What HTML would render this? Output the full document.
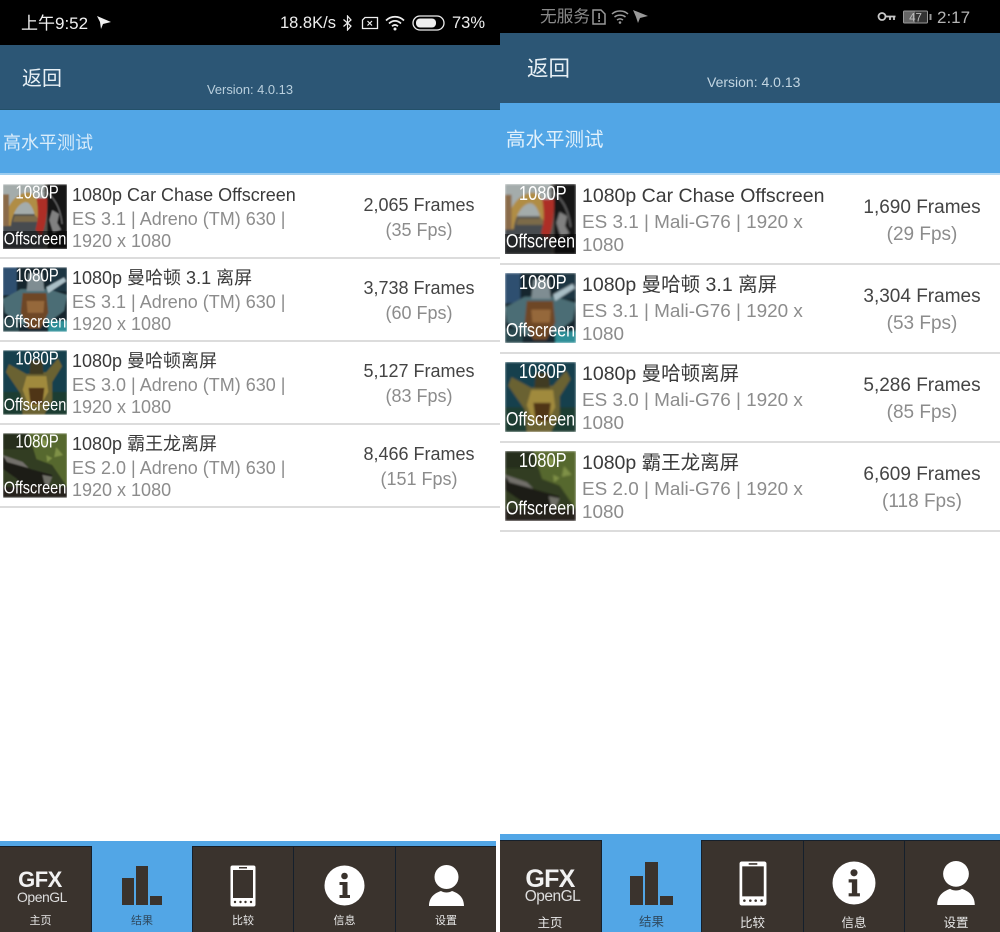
<!DOCTYPE html>
<html><head><meta charset="utf-8">
<style>
html,body{margin:0;padding:0;background:#fff;}
#p{position:relative;width:1000px;height:932px;overflow:hidden;background:#fff;font-family:"Liberation Sans","Noto Sans CJK SC",sans-serif;}
.a{position:absolute;}
.t{position:absolute;white-space:nowrap;line-height:1;}
.th{position:absolute;overflow:hidden;}
.th svg{position:absolute;left:0;top:0;width:100%;height:100%;}
.th .u,.th .d{position:absolute;left:0;width:100%;text-align:center;color:#fff;line-height:1;white-space:nowrap;transform:scaleY(1.22);transform-origin:50% 0;}
.th .bg{position:absolute;left:0;width:100%;background:rgba(0,0,0,.5);}
.lab{position:absolute;color:#e8e8e8;text-align:center;font-size:11px;line-height:1;white-space:nowrap;}
.l1{font-size:18px;color:#3a3a3a}
.l2{font-size:18px;color:#8c8c8c}
.r1{font-size:19.5px;color:#3a3a3a}
.r2{font-size:18.9px;color:#8c8c8c}
.lf{left:339px;width:160px;text-align:center;font-size:18px}
.rf{left:842px;width:160px;text-align:center;font-size:19px}
</style></head><body><div id="p">
<svg width="0" height="0" class="a"><defs>
<filter id="b" x="-10%" y="-10%" width="120%" height="120%"><feGaussianBlur stdDeviation="0.9"/></filter>
<g id="car"><rect width="65" height="65" fill="#55534e"/><rect width="42" height="30" fill="#a4acab"/><rect y="36" width="42" height="29" fill="#474b4f"/><path d="M0 42C3 22 12 9 25 8C33 8 37 18 38 34L33 34C31 24 27 17 22 18C14 20 9 32 8 42Z" fill="#b08d45"/><path d="M0 10H6V42H0Z" fill="#8a6a48"/><path d="M12 32L34 32L36 38L10 38Z" fill="#7b6a4a"/><path d="M34 14L45 14C45 30 43 44 39 52L33 46C36 36 36 26 34 14Z" fill="#ad2f27"/><rect x="45" y="0" width="20" height="65" fill="#141417"/><path d="M36 6C48 6 58 20 60 40" fill="none" stroke="#777" stroke-width="1"/><path d="M50 26l7 4-2 9 4 7-8 3-4-13z" fill="#808080"/></g>
<g id="man31"><rect width="65" height="65" fill="#14262f"/><rect x="0" y="0" width="14" height="28" fill="#2f4f70"/><rect x="48" y="0" width="17" height="24" fill="#1c3442"/><path d="M0 32L18 22L46 22L65 28L62 44L46 56L20 58L2 46Z" fill="#4c6d74"/><path d="M20 26L44 26L46 46L38 62L26 62L18 46Z" fill="#6e4726"/><path d="M24 34L42 34L41 46L25 46Z" fill="#95683a"/><path d="M26 6L40 6L42 24L24 24Z" fill="#7f8d92"/><path d="M44 20L62 10L64 14L46 26Z" fill="#a9bec6"/><rect y="54" x="46" width="19" height="11" fill="#2f8f98"/><rect y="52" x="0" width="16" height="13" fill="#2a4a50"/></g>
<g id="man"><rect width="65" height="65" fill="#17414d"/><rect y="42" width="65" height="23" fill="#1f3d33"/><path d="M6 14L24 24L44 22L56 8L60 16L50 32L50 50L42 65L20 65L18 44L3 22Z" fill="#6a6230"/><path d="M24 26L44 26L46 42L38 56L26 56L20 40Z" fill="#a08a3e"/><path d="M26 38L42 38L40 55L28 55Z" fill="#4f3519"/><path d="M28 10L40 10L41 24L27 24Z" fill="#3f3a20"/></g>
<g id="rex"><rect width="65" height="65" fill="#333c20"/><path d="M26 0L65 0L65 54L50 32L34 26Z" fill="#56682f"/><path d="M38 4l8 5-5 6zM54 14l7 8-9 2zM44 22l6 3-5 4z" fill="#7f9146"/><rect y="0" width="26" height="16" fill="#262f1c"/><path d="M0 24L28 36L50 42L46 56L24 60L14 46L0 36Z" fill="#1e1b19"/><path d="M0 22L20 29L26 35L4 29Z" fill="#72706a"/><path d="M40 42L50 44L46 54L42 50Z" fill="#6e6e66"/><rect y="54" width="65" height="11" fill="#26241b"/></g>
</defs></svg>

<!-- LEFT -->
<div class="a" style="left:0;top:0;width:500px;height:45px;background:#000"></div>
<div class="a" style="left:0;top:45px;width:500px;height:64px;background:#2c5675"></div>
<div class="a" style="left:0;top:109px;width:500px;height:1px;background:#235069"></div>
<div class="a" style="left:0;top:110px;width:500px;height:64px;background:#52a6e6"></div>
<div class="a" style="left:0;top:173px;width:500px;height:2px;background:#9ccdf0"></div>
<div class="t" style="left:21px;top:15px;font-size:17px;color:#f0f0f0">上午9:52</div>
<svg class="a" style="left:96px;top:15px" width="16" height="15" viewBox="0 0 16 15"><path d="M1 1L15 7L7 9L5 14L4 7Z" fill="#f0f0f0"/></svg>
<div class="t" style="left:280px;top:15px;font-size:16.5px;color:#eee">18.8K/s</div>
<svg class="a" style="left:342px;top:15px" width="11" height="16" viewBox="0 0 11 16"><path d="M1.5 4.5L9 11L5.5 15V1L9 5L1.5 11.5" fill="none" stroke="#eee" stroke-width="1.2"/></svg>
<svg class="a" style="left:361px;top:16px" width="18" height="14" viewBox="0 0 18 14"><path d="M4 1.5H16.5V12.5H1.5V4Z" fill="none" stroke="#eee" stroke-width="1.3"/><path d="M6.5 5L11 9.5M11 5L6.5 9.5" stroke="#eee" stroke-width="1.2"/></svg>
<svg class="a" style="left:385px;top:15px" width="21" height="16" viewBox="0 0 21 16"><path d="M1 5.5C6 .5 14 .5 19 5.5M4 8.5C7.5 5 12.5 5 16 8.5M7 11.3C9 9.5 11 9.5 13 11.3" fill="none" stroke="#eee" stroke-width="1.7"/><circle cx="10" cy="14" r="1.5" fill="#eee"/></svg>
<svg class="a" style="left:412px;top:15px" width="33" height="16" viewBox="0 0 33 16"><rect x="1" y="1" width="31" height="14" rx="7" fill="none" stroke="#eee" stroke-width="1.3"/><rect x="4" y="3.5" width="20" height="9" rx="4" fill="#eee"/></svg>
<div class="t" style="left:452px;top:15px;font-size:16.5px;color:#eee">73%</div>
<div class="t" style="left:22px;top:69px;font-size:20px;color:#e8f0f5">返回</div>
<div class="t" style="left:207px;top:84px;font-size:12.9px;color:#b9cfdd">Version: 4.0.13</div>
<div class="t" style="left:3px;top:134px;font-size:18px;color:#d9ecfa">高水平测试</div>

<!-- left rows -->
<div class="a" style="left:0;top:257px;width:500px;height:2px;background:#dcdcdc"></div>
<div class="a" style="left:0;top:340px;width:500px;height:2px;background:#dcdcdc"></div>
<div class="a" style="left:0;top:423px;width:500px;height:2px;background:#dcdcdc"></div>
<div class="a" style="left:0;top:506px;width:500px;height:2px;background:#dcdcdc"></div>

<div class="th" style="left:3px;top:184px;width:64px;height:65px"><svg viewBox="0 0 65 65"><use href="#car" filter="url(#b)"/></svg><div class="bg" style="top:47px;height:18px"></div><div class="u" style="top:0;font-size:15px">&nbsp;1080P</div><div class="d" style="top:47px;font-size:14.5px">Offscreen</div></div>
<div class="th" style="left:3px;top:267px;width:64px;height:65px"><svg viewBox="0 0 65 65"><use href="#man31" filter="url(#b)"/></svg><div class="u" style="top:0;font-size:15px">&nbsp;1080P</div><div class="d" style="top:47px;font-size:14.5px">Offscreen</div></div>
<div class="th" style="left:3px;top:350px;width:64px;height:65px"><svg viewBox="0 0 65 65"><use href="#man" filter="url(#b)"/></svg><div class="u" style="top:0;font-size:15px">&nbsp;1080P</div><div class="d" style="top:47px;font-size:14.5px">Offscreen</div></div>
<div class="th" style="left:3px;top:433px;width:64px;height:65px"><svg viewBox="0 0 65 65"><use href="#rex" filter="url(#b)"/></svg><div class="u" style="top:0;font-size:15px">&nbsp;1080P</div><div class="d" style="top:47px;font-size:14.5px">Offscreen</div></div>

<div class="t l1" style="left:72px;top:186px">1080p Car Chase Offscreen</div>
<div class="t l2" style="left:72px;top:210px">ES 3.1 | Adreno (TM) 630 |</div>
<div class="t l2" style="left:72px;top:232px">1920 x 1080</div>
<div class="t l1" style="left:72px;top:269px">1080p 曼哈顿 3.1 离屏</div>
<div class="t l2" style="left:72px;top:293px">ES 3.1 | Adreno (TM) 630 |</div>
<div class="t l2" style="left:72px;top:315px">1920 x 1080</div>
<div class="t l1" style="left:72px;top:352px">1080p 曼哈顿离屏</div>
<div class="t l2" style="left:72px;top:376px">ES 3.0 | Adreno (TM) 630 |</div>
<div class="t l2" style="left:72px;top:398px">1920 x 1080</div>
<div class="t l1" style="left:72px;top:435px">1080p 霸王龙离屏</div>
<div class="t l2" style="left:72px;top:459px">ES 2.0 | Adreno (TM) 630 |</div>
<div class="t l2" style="left:72px;top:481px">1920 x 1080</div>

<div class="t lf" style="top:196px;color:#444">2,065 Frames</div>
<div class="t lf" style="top:221px;color:#8c8c8c">(35 Fps)</div>
<div class="t lf" style="top:279px;color:#444">3,738 Frames</div>
<div class="t lf" style="top:304px;color:#8c8c8c">(60 Fps)</div>
<div class="t lf" style="top:362px;color:#444">5,127 Frames</div>
<div class="t lf" style="top:387px;color:#8c8c8c">(83 Fps)</div>
<div class="t lf" style="top:445px;color:#444">8,466 Frames</div>
<div class="t lf" style="top:470px;color:#8c8c8c">(151 Fps)</div>

<!-- left tab bar -->
<div class="a" style="left:0;top:841px;width:496px;height:6px;background:#52a6e6"></div>
<div class="a" style="left:0;top:846px;width:496px;height:86px;background:#15202c"></div>
<div class="a" style="left:0;top:847px;width:91px;height:85px;background:#3a332d"></div>
<div class="a" style="left:92px;top:841px;width:100px;height:91px;background:#52a6e6"></div>
<div class="a" style="left:193px;top:847px;width:100px;height:85px;background:#3a332d"></div>
<div class="a" style="left:294px;top:847px;width:101px;height:85px;background:#3a332d"></div>
<div class="a" style="left:396px;top:847px;width:100px;height:85px;background:#3a332d"></div>
<div class="t" style="left:0;width:80px;text-align:center;top:869px;font-size:22px;font-weight:bold;color:#f2f2f2;letter-spacing:-.5px">GFX</div>
<div class="t" style="left:0;width:84px;text-align:center;top:890px;font-size:14px;color:#ddd;letter-spacing:-.5px">OpenGL</div>
<div class="lab" style="left:0;width:81px;top:916px">主页</div>
<svg class="a" style="left:121px;top:865px" width="42" height="41"><path d="M1 13H13V40H1ZM15 1H27V40H15ZM29 31H41V40H29Z" fill="#3a332d"/></svg>
<div class="lab" style="left:92px;width:100px;top:916px;color:#2f4a60">结果</div>
<svg class="a" style="left:230px;top:865px" width="26" height="42" viewBox="0 0 26 42"><rect x="0.5" y="0.5" width="25" height="41" rx="2" fill="#fff"/><rect x="3" y="5" width="20" height="28" fill="#3a332d"/><rect x="9" y="2" width="8" height="1.5" fill="#3a332d"/><circle cx="5" cy="37" r="1.2" fill="#3a332d"/><circle cx="10.5" cy="37" r="1.2" fill="#3a332d"/><circle cx="15.5" cy="37" r="1.2" fill="#3a332d"/><circle cx="21" cy="37" r="1.2" fill="#3a332d"/></svg>
<div class="lab" style="left:193px;width:100px;top:916px">比较</div>
<svg class="a" style="left:324px;top:865px" width="41" height="41" viewBox="0 0 41 41"><circle cx="20.5" cy="20.5" r="20" fill="#fff"/><circle cx="20.5" cy="11" r="3.3" fill="#3a332d"/><path d="M15.5 17H23.5V30H26V33H15.5V30H18.5V20H15.5Z" fill="#3a332d"/></svg>
<div class="lab" style="left:294px;width:101px;top:916px">信息</div>
<svg class="a" style="left:429px;top:865px" width="35" height="41" viewBox="0 0 35 41"><circle cx="17.5" cy="12" r="12" fill="#fff"/><path d="M0 41C0 32 6 28 12 26C15 28 20 28 23 26C29 28 35 32 35 41Z" fill="#fff"/></svg>
<div class="lab" style="left:396px;width:100px;top:916px">设置</div>

<!-- RIGHT -->
<div class="a" style="left:500px;top:0;width:500px;height:33px;background:#000"></div>
<div class="a" style="left:500px;top:33px;width:500px;height:70px;background:#2c5675"></div>
<div class="a" style="left:500px;top:103px;width:500px;height:70px;background:#52a6e6"></div>
<div class="a" style="left:500px;top:173px;width:500px;height:2px;background:#b5daf4"></div>
<div class="t" style="left:540px;top:9px;font-size:16.7px;color:#8a8a8a">无服务</div>
<svg class="a" style="left:592px;top:9px" width="14" height="16" viewBox="0 0 14 16"><path d="M1 1H9L13 5V15H1Z" fill="none" stroke="#999" stroke-width="1.5"/><rect x="6.3" y="4" width="1.6" height="6" fill="#999"/><rect x="6.3" y="11" width="1.6" height="2" fill="#999"/></svg>
<svg class="a" style="left:611px;top:9px" width="18" height="15" viewBox="0 0 18 15"><path d="M1 5C5 1 13 1 17 5M3.5 8C6.5 5.5 11.5 5.5 14.5 8M6 11C8 9.500 10 9.500 12 11" fill="none" stroke="#999" stroke-width="1.5"/><circle cx="9" cy="13.5" r="1.3" fill="#999"/></svg>
<svg class="a" style="left:632px;top:9px" width="17" height="15" viewBox="0 0 17 15"><path d="M1 1L16 7L8 9L6 14L4 8Z" fill="#999"/></svg>
<svg class="a" style="left:877px;top:11px" width="19" height="11" viewBox="0 0 19 11"><circle cx="5" cy="5.5" r="3.5" fill="none" stroke="#c8c8c8" stroke-width="1.8"/><path d="M8.5 5.5H18.5M13 5.5V9M17 5.5V9" stroke="#c8c8c8" stroke-width="1.8" fill="none"/></svg>
<svg class="a" style="left:903px;top:10px" width="29" height="14" viewBox="0 0 29 14"><rect x="0.5" y="1" width="24" height="12" rx="1" fill="#333" stroke="#999"/><rect x="1" y="1.5" width="11" height="11" fill="#666"/><rect x="26.5" y="4" width="2" height="6" fill="#999"/><text x="12.5" y="11.5" text-anchor="middle" font-size="11.5" font-family="Liberation Sans" fill="#bbb">47</text></svg>
<div class="t" style="left:937px;top:9px;font-size:17px;color:#b5b5b5">2:17</div>
<div class="t" style="left:527px;top:59px;font-size:21.5px;color:#e8f0f5">返回</div>
<div class="t" style="left:707px;top:75px;font-size:14px;color:#c3d6e2">Version: 4.0.13</div>
<div class="t" style="left:506px;top:131px;font-size:19.5px;color:#e0f0fb">高水平测试</div>

<div class="a" style="left:500px;top:263px;width:500px;height:2px;background:#dcdcdc"></div>
<div class="a" style="left:500px;top:352px;width:500px;height:2px;background:#dcdcdc"></div>
<div class="a" style="left:500px;top:441px;width:500px;height:2px;background:#dcdcdc"></div>
<div class="a" style="left:500px;top:530px;width:500px;height:2px;background:#dcdcdc"></div>

<div class="th" style="left:505px;top:184px;width:71px;height:70px"><svg viewBox="0 0 65 65" preserveAspectRatio="none"><use href="#car" filter="url(#b)"/></svg><div class="bg" style="top:50px;height:20px"></div><div class="u" style="top:0;font-size:16.5px">&nbsp;1080P</div><div class="d" style="top:49px;font-size:16px">Offscreen</div></div>
<div class="th" style="left:505px;top:273px;width:71px;height:70px"><svg viewBox="0 0 65 65" preserveAspectRatio="none"><use href="#man31" filter="url(#b)"/></svg><div class="u" style="top:0;font-size:16.5px">&nbsp;1080P</div><div class="d" style="top:49px;font-size:16px">Offscreen</div></div>
<div class="th" style="left:505px;top:362px;width:71px;height:70px"><svg viewBox="0 0 65 65" preserveAspectRatio="none"><use href="#man" filter="url(#b)"/></svg><div class="u" style="top:0;font-size:16.5px">&nbsp;1080P</div><div class="d" style="top:49px;font-size:16px">Offscreen</div></div>
<div class="th" style="left:505px;top:451px;width:71px;height:70px"><svg viewBox="0 0 65 65" preserveAspectRatio="none"><use href="#rex" filter="url(#b)"/></svg><div class="u" style="top:0;font-size:16.5px">&nbsp;1080P</div><div class="d" style="top:49px;font-size:16px">Offscreen</div></div>

<div class="t r1" style="left:582px;top:187px">1080p Car Chase Offscreen</div>
<div class="t r2" style="left:582px;top:214px">ES 3.1 | Mali-G76 | 1920 x</div>
<div class="t r2" style="left:582px;top:237px">1080</div>
<div class="t r1" style="left:582px;top:276px">1080p 曼哈顿 3.1 离屏</div>
<div class="t r2" style="left:582px;top:303px">ES 3.1 | Mali-G76 | 1920 x</div>
<div class="t r2" style="left:582px;top:326px">1080</div>
<div class="t r1" style="left:582px;top:365px">1080p 曼哈顿离屏</div>
<div class="t r2" style="left:582px;top:392px">ES 3.0 | Mali-G76 | 1920 x</div>
<div class="t r2" style="left:582px;top:415px">1080</div>
<div class="t r1" style="left:582px;top:454px">1080p 霸王龙离屏</div>
<div class="t r2" style="left:582px;top:481px">ES 2.0 | Mali-G76 | 1920 x</div>
<div class="t r2" style="left:582px;top:504px">1080</div>

<div class="t rf" style="top:198px;color:#444">1,690 Frames</div>
<div class="t rf" style="top:225px;color:#8c8c8c">(29 Fps)</div>
<div class="t rf" style="top:287px;color:#444">3,304 Frames</div>
<div class="t rf" style="top:314px;color:#8c8c8c">(53 Fps)</div>
<div class="t rf" style="top:376px;color:#444">5,286 Frames</div>
<div class="t rf" style="top:403px;color:#8c8c8c">(85 Fps)</div>
<div class="t rf" style="top:465px;color:#444">6,609 Frames</div>
<div class="t rf" style="top:492px;color:#8c8c8c">(118 Fps)</div>

<!-- right tab bar -->
<div class="a" style="left:500px;top:834px;width:500px;height:7px;background:#52a6e6"></div>
<div class="a" style="left:500px;top:840px;width:500px;height:92px;background:#15202c"></div>
<div class="a" style="left:500px;top:841px;width:101px;height:91px;background:#3a332d"></div>
<div class="a" style="left:602px;top:834px;width:99px;height:98px;background:#52a6e6"></div>
<div class="a" style="left:702px;top:841px;width:101px;height:91px;background:#3a332d"></div>
<div class="a" style="left:804px;top:841px;width:100px;height:91px;background:#3a332d"></div>
<div class="a" style="left:905px;top:841px;width:95px;height:91px;background:#3a332d"></div>
<div class="t" style="left:500px;width:100px;text-align:center;top:867px;font-size:25px;font-weight:bold;color:#f2f2f2;letter-spacing:-.7px">GFX</div>
<div class="t" style="left:500px;width:105px;text-align:center;top:889px;font-size:15.5px;color:#ddd;letter-spacing:-.5px">OpenGL</div>
<div class="lab" style="left:500px;width:100px;top:917px;font-size:12.5px">主页</div>
<svg class="a" style="left:629px;top:861px" width="45" height="44"><path d="M1 15H14V44H1ZM16 1H29V44H16ZM31 35H44V44H31Z" fill="#3a332d"/></svg>
<div class="lab" style="left:602px;width:99px;top:916px;font-size:12.5px;color:#2f4a60">结果</div>
<svg class="a" style="left:739px;top:861px" width="28" height="45" viewBox="0 0 26 42" preserveAspectRatio="none"><rect x="0.5" y="0.5" width="25" height="41" rx="2" fill="#fff"/><rect x="3" y="5" width="20" height="28" fill="#3a332d"/><rect x="9" y="2" width="8" height="1.5" fill="#3a332d"/><circle cx="5" cy="37" r="1.2" fill="#3a332d"/><circle cx="10.5" cy="37" r="1.2" fill="#3a332d"/><circle cx="15.5" cy="37" r="1.2" fill="#3a332d"/><circle cx="21" cy="37" r="1.2" fill="#3a332d"/></svg>
<div class="lab" style="left:702px;width:101px;top:917px;font-size:12.5px">比较</div>
<svg class="a" style="left:832px;top:861px" width="44" height="44" viewBox="0 0 41 41"><circle cx="20.5" cy="20.5" r="20" fill="#fff"/><circle cx="20.5" cy="11" r="3.3" fill="#3a332d"/><path d="M15.5 17H23.5V30H26V33H15.5V30H18.5V20H15.5Z" fill="#3a332d"/></svg>
<div class="lab" style="left:804px;width:100px;top:917px;font-size:12.5px">信息</div>
<svg class="a" style="left:937px;top:861px" width="38" height="44" viewBox="0 0 35 41"><circle cx="17.5" cy="12" r="12" fill="#fff"/><path d="M0 41C0 32 6 28 12 26C15 28 20 28 23 26C29 28 35 32 35 41Z" fill="#fff"/></svg>
<div class="lab" style="left:905px;width:102px;top:917px;font-size:12.5px">设置</div>
</div></body></html>
